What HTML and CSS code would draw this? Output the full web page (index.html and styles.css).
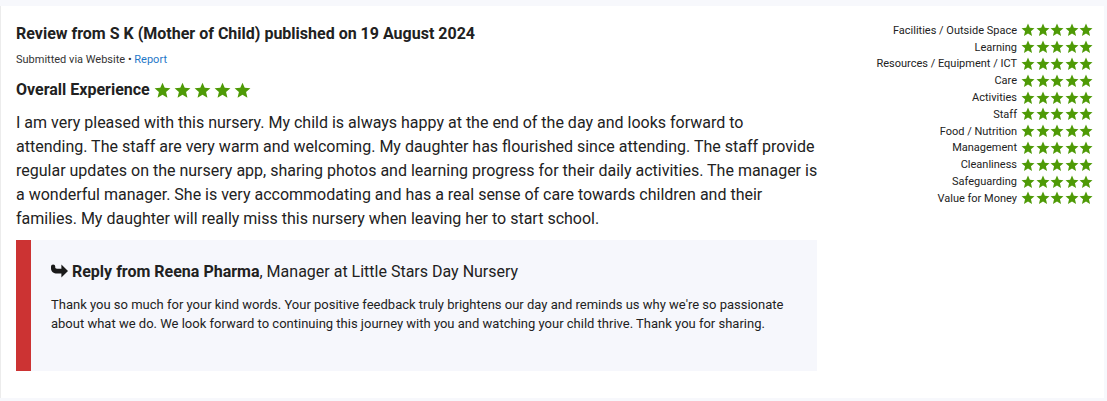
FILE: index.html
```html
<!DOCTYPE html>
<html>
<head>
<meta charset="utf-8">
<link rel="stylesheet" href="styles.css">
</head>
<body>
<svg width="0" height="0" class="defs">
  <defs>
    <symbol id="star" viewBox="0 0 20 20">
      <path d="M10 0.8 L12.6 6.9 L19.3 7.4 L14.2 11.8 L15.8 18.4 L10 14.9 L4.2 18.4 L5.8 11.8 L0.7 7.4 L7.4 6.9 Z"/>
    </symbol>
  </defs>
</svg>
<div class="card">
  <div class="main">
    <h2 class="title">Review from S K (Mother of Child) published on 19 August 2024</h2>
    <div class="meta">Submitted via Website • <a class="report" href="#">Report</a></div>
    <div class="overall">
      <span class="overall-label">Overall Experience</span>
      <span class="stars big">
        <svg><use href="#star"/></svg><svg><use href="#star"/></svg><svg><use href="#star"/></svg><svg><use href="#star"/></svg><svg><use href="#star"/></svg>
      </span>
    </div>
    <p class="review">I am very pleased with this nursery. My child is always happy at the end of the day and looks forward to attending. The staff are very warm and welcoming. My daughter has flourished since attending. The staff provide regular updates on the nursery app, sharing photos and learning progress for their daily activities. The manager is a wonderful manager. She is very accommodating and has a real sense of care towards children and their families. My daughter will really miss this nursery when leaving her to start school.</p>
    <div class="reply">
      <div class="reply-head"><svg class="reply-icon" viewBox="0 0 18 14"><path d="M11 0 L18 7 L11 14 L11 9.6 L6.5 9.6 C2.8 9.6 0 7.6 0 4 L0 2.3 A2.25 2.25 0 0 1 4.5 2.3 L4.5 3.3 C4.5 4.1 5.1 4.5 6.3 4.5 L11 4.5 Z"/></svg> <strong>Reply from Reena Pharma</strong>, Manager at Little Stars Day Nursery</div>
      <p class="reply-text">Thank you so much for your kind words. Your positive feedback truly brightens our day and reminds us why we're so passionate about what we do. We look forward to continuing this journey with you and watching your child thrive. Thank you for sharing.</p>
    </div>
  </div>
  <div class="ratings">
    <div class="row"><span>Facilities / Outside Space</span><span class="stars small"><svg><use href="#star"/></svg><svg><use href="#star"/></svg><svg><use href="#star"/></svg><svg><use href="#star"/></svg><svg><use href="#star"/></svg></span></div>
    <div class="row"><span>Learning</span><span class="stars small"><svg><use href="#star"/></svg><svg><use href="#star"/></svg><svg><use href="#star"/></svg><svg><use href="#star"/></svg><svg><use href="#star"/></svg></span></div>
    <div class="row"><span>Resources / Equipment / ICT</span><span class="stars small"><svg><use href="#star"/></svg><svg><use href="#star"/></svg><svg><use href="#star"/></svg><svg><use href="#star"/></svg><svg><use href="#star"/></svg></span></div>
    <div class="row"><span>Care</span><span class="stars small"><svg><use href="#star"/></svg><svg><use href="#star"/></svg><svg><use href="#star"/></svg><svg><use href="#star"/></svg><svg><use href="#star"/></svg></span></div>
    <div class="row"><span>Activities</span><span class="stars small"><svg><use href="#star"/></svg><svg><use href="#star"/></svg><svg><use href="#star"/></svg><svg><use href="#star"/></svg><svg><use href="#star"/></svg></span></div>
    <div class="row"><span>Staff</span><span class="stars small"><svg><use href="#star"/></svg><svg><use href="#star"/></svg><svg><use href="#star"/></svg><svg><use href="#star"/></svg><svg><use href="#star"/></svg></span></div>
    <div class="row"><span>Food / Nutrition</span><span class="stars small"><svg><use href="#star"/></svg><svg><use href="#star"/></svg><svg><use href="#star"/></svg><svg><use href="#star"/></svg><svg><use href="#star"/></svg></span></div>
    <div class="row"><span>Management</span><span class="stars small"><svg><use href="#star"/></svg><svg><use href="#star"/></svg><svg><use href="#star"/></svg><svg><use href="#star"/></svg><svg><use href="#star"/></svg></span></div>
    <div class="row"><span>Cleanliness</span><span class="stars small"><svg><use href="#star"/></svg><svg><use href="#star"/></svg><svg><use href="#star"/></svg><svg><use href="#star"/></svg><svg><use href="#star"/></svg></span></div>
    <div class="row"><span>Safeguarding</span><span class="stars small"><svg><use href="#star"/></svg><svg><use href="#star"/></svg><svg><use href="#star"/></svg><svg><use href="#star"/></svg><svg><use href="#star"/></svg></span></div>
    <div class="row"><span>Value for Money</span><span class="stars small"><svg><use href="#star"/></svg><svg><use href="#star"/></svg><svg><use href="#star"/></svg><svg><use href="#star"/></svg><svg><use href="#star"/></svg></span></div>
  </div>
</div>
</body>
</html>
```

FILE: styles.css
```css
html, body {
  margin: 0;
  padding: 0;
}
body {
  background: #f7f8fc;
  font-family: Roboto, "Liberation Sans", Arial, sans-serif;
  color: #212121;
  padding-top: 6px;
  height: 401px;
  box-sizing: border-box;
}
.defs {
  position: absolute;
  width: 0;
  height: 0;
}
.card {
  background: #fff;
  border-left: 1px solid #ececec;
  margin-right: 3px;
  height: 392px;
  box-sizing: border-box;
  display: flex;
  padding: 17px 11px 0 15px;
}
.main {
  width: 806px;
  flex: none;
}
.title {
  font-size: 16px;
  font-weight: 700;
  line-height: 22px;
  margin: 0;
}
.meta {
  font-size: 11px;
  line-height: 16px;
  margin-top: 7px;
  color: #333;
}
.report {
  color: #1f78c8;
  text-decoration: none;
}
.overall {
  display: flex;
  align-items: center;
  margin-top: 11px;
  height: 22px;
}
.overall-label {
  font-size: 16px;
  font-weight: 700;
  line-height: 22px;
}
.stars {
  display: inline-flex;
  fill: #4e9a06;
}
.stars.big {
  margin-left: 4px;
  gap: 3px;
}
.stars.big svg {
  width: 17px;
  height: 17px;
}
.review {
  width: 801.9px;
  font-size: 16px;
  line-height: 24px;
  margin: 10px 0 0 0;
  color: #222;
}
.reply {
  margin-top: 9px;
  width: 801px;
  background: #f6f7fc;
  border-left: 15px solid #cc3333;
  padding: 21px 20px 0 20px;
  height: 131px;
  box-sizing: border-box;
}
.reply-head {
  font-size: 16px;
  line-height: 22px;
}
.reply-head strong {
  font-weight: 700;
}
.reply-icon {
  width: 17px;
  height: 14px;
  fill: #1a1a1a;
  vertical-align: -1px;
}
.reply-text {
  font-size: 13px;
  line-height: 19px;
  margin: 12px 0 0 0;
  color: #222;
}
.ratings {
  flex: 1;
  display: flex;
  flex-direction: column;
  align-items: flex-end;
  margin-top: -1px;
}
.row {
  display: flex;
  align-items: center;
  height: 16.8px;
  font-size: 11px;
  color: #222;
}
.stars.small {
  margin-left: 4px;
  gap: 0.5px;
}
.stars.small svg {
  width: 14px;
  height: 14px;
}
```
